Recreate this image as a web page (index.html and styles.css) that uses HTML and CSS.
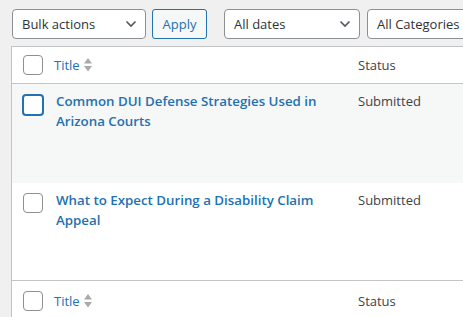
FILE: index.html
```html
<!DOCTYPE html>
<html>
<head>
<meta charset="utf-8">
<link rel="stylesheet" href="styles.css">
</head>
<body>
<div class="toolbar">
  <div class="select w-bulk"><span>Bulk actions</span><svg class="chev" width="12" height="8" viewBox="0 0 12 8"><polyline points="1.5,1.5 6,6 10.5,1.5" fill="none" stroke="#50575e" stroke-width="1.6"/></svg></div>
  <div class="button">Apply</div>
  <div class="select w-dates"><span>All dates</span><svg class="chev" width="12" height="8" viewBox="0 0 12 8"><polyline points="1.5,1.5 6,6 10.5,1.5" fill="none" stroke="#50575e" stroke-width="1.6"/></svg></div>
  <div class="select w-cats"><span>All Categories</span></div>
</div>
<div class="table">
  <div class="row head">
    <div class="cb"><span class="box"></span></div>
    <div class="col-title"><span class="link">Title</span><svg class="sort" width="10" height="16" viewBox="0 0 10 16"><polygon points="5,1 9,6.5 1,6.5" fill="#a7aaad"/><polygon points="1,9 9,9 5,14.5" fill="#a7aaad"/></svg></div>
    <div class="col-status">Status</div>
  </div>
  <div class="row item alt r1">
    <div class="cb"><span class="box focus"></span></div>
    <div class="col-title"><span class="title-link">Common DUI Defense Strategies Used in Arizona Courts</span></div>
    <div class="col-status">Submitted</div>
  </div>
  <div class="row item r2">
    <div class="cb"><span class="box"></span></div>
    <div class="col-title"><span class="title-link">What to Expect During a Disability Claim Appeal</span></div>
    <div class="col-status">Submitted</div>
  </div>
  <div class="row head foot">
    <div class="cb"><span class="box"></span></div>
    <div class="col-title"><span class="link">Title</span><svg class="sort" width="10" height="16" viewBox="0 0 10 16"><polygon points="5,1 9,6.5 1,6.5" fill="#a7aaad"/><polygon points="1,9 9,9 5,14.5" fill="#a7aaad"/></svg></div>
    <div class="col-status">Status</div>
  </div>
</div>
</body>
</html>
```

FILE: styles.css
```css
html, body {
  margin: 0;
  padding: 0;
}
body {
  background: #f0f0f1;
  font-family: "Open Sans", "Noto Sans", sans-serif;
  font-size: 13px;
  color: #3c434a;
  overflow: hidden;
  width: 463px;
  height: 317px;
}
.toolbar {
  display: flex;
  align-items: center;
  padding: 9px 0 0 12px;
  height: 30px;
  width: 600px;
  white-space: nowrap;
}
.toolbar > * {
  flex: none;
}
.select {
  box-sizing: border-box;
  height: 30px;
  border: 1px solid #8c8f94;
  border-radius: 4px;
  background: #fff;
  color: #2c3338;
  display: flex;
  align-items: center;
  justify-content: space-between;
  padding: 0 8px 0 9px;
}
.w-bulk { width: 134px; }
.w-dates { width: 136px; margin-left: 17px; }
.w-cats { width: 140px; margin-left: 7px; }
.chev { display: block; }
.button {
  box-sizing: border-box;
  height: 30px;
  width: 55px;
  margin-left: 6px;
  border: 1px solid #2271b1;
  border-radius: 3px;
  background: #f6f7f7;
  color: #2271b1;
  display: flex;
  align-items: center;
  justify-content: center;
}
.table {
  margin: 7px 0 0 11px;
  width: 600px;
  background: #fff;
  border: 1px solid #c3c4c7;
}
.row {
  display: grid;
  grid-template-columns: 42px 304px 1fr;
}
.head {
  height: 36px;
  align-items: center;
  border-bottom: 1px solid #c3c4c7;
}
.foot {
  border-bottom: none;
  border-top: 1px solid #c3c4c7;
  height: 40px;
}
.cb {
  padding-left: 11px;
  display: flex;
  align-items: center;
}
.box {
  box-sizing: border-box;
  width: 20px;
  height: 20px;
  border: 1px solid #8c8f94;
  border-radius: 4px;
  background: #fff;
  display: block;
}
.box.focus {
  border: 2px solid #2271b1;
  width: 22px;
  height: 22px;
  margin-left: -1px;
}
.col-title {
  display: flex;
  align-items: center;
}
.link { color: #2271b1; }
.sort { margin-left: 3px; display: block; }
.item {
  align-items: start;
}
.item .cb { padding-top: 10px; }
.item .col-title, .item .col-status {
  padding-top: 8px;
  line-height: 19.6px;
}
.item .col-title {
  padding-right: 12px;
}
.title-link {
  color: #2271b1;
  font-weight: 600;
  font-size: 13.3px;
  margin-left: 2px;
}
.alt { background: #f6f7f7; }
.r1 { height: 99px; }
.r2 { height: 97px; }
```
